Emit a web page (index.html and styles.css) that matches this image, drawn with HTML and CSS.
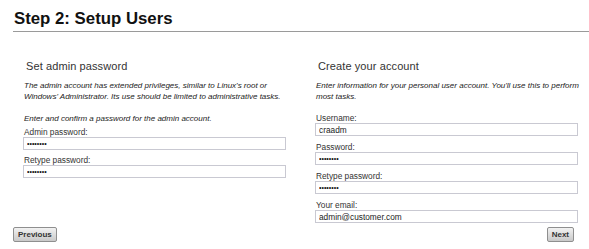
FILE: index.html
```html
<!DOCTYPE html>
<html>
<head>
<meta charset="utf-8">
<link rel="stylesheet" href="styles.css">
</head>
<body>
<div class="page">
  <h1 class="title">Step 2: Setup Users</h1>
  <div class="columns">
    <section class="col col-left">
      <h2 class="col-title">Set admin password</h2>
      <p class="note">The admin account has extended privileges, similar to Linux's root or Windows' Administrator. Its use should be limited to administrative tasks.</p>
      <p class="note note-2">Enter and confirm a password for the admin account.</p>
      <label class="field"><span class="label">Admin password:</span><input class="input pw" type="password" value="xxxxxxxx"></label>
      <label class="field"><span class="label">Retype password:</span><input class="input pw" type="password" value="xxxxxxxx"></label>
    </section>
    <section class="col">
      <h2 class="col-title">Create your account</h2>
      <p class="note">Enter information for your personal user account. You'll use this to perform most tasks.</p>
      <label class="field"><span class="label">Username:</span><input class="input" type="text" value="craadm"></label>
      <label class="field"><span class="label">Password:</span><input class="input pw" type="password" value="xxxxxxxx"></label>
      <label class="field"><span class="label">Retype password:</span><input class="input pw" type="password" value="xxxxxxxx"></label>
      <label class="field"><span class="label">Your email:</span><input class="input" type="text" value="admin@customer.com"></label>
    </section>
  </div>
  <div class="footer">
    <button class="btn" type="button">Previous</button>
    <button class="btn" type="button">Next</button>
  </div>
</div>
</body>
</html>
```
FILE: styles.css
```css
html, body {
  margin: 0;
  padding: 0;
  background: #fff;
}
body {
  font-family: "Liberation Sans", Arial, sans-serif;
  color: #333;
}
.page {
  padding-left: 13px;
  width: 576px;
}
.title {
  margin: 0;
  padding: 9px 0 2px 1px;
  font-size: 16.8px;
  line-height: 20px;
  font-weight: bold;
  color: #111;
  border-bottom: 1px solid #9a9a9a;
}
.columns {
  display: grid;
  grid-template-columns: 263px 263px;
  column-gap: 29px;
  padding-left: 10px;
  margin-top: 28px;
}
.col {
  display: flex;
  flex-direction: column;
}
.col-title {
  margin: 0 0 7px 3px;
  font-size: 11px;
  line-height: 13px;
  font-weight: normal;
  color: #333;
  letter-spacing: 0.1px;
}
.note {
  margin: 0 0 11px 1px;
  font-size: 8px;
  line-height: 11px;
  font-style: italic;
  color: #222;
  width: 270px;
}
.note-2 {
  margin-bottom: 3px;
}
.field {
  display: flex;
  flex-direction: column;
  margin-bottom: 6px;
}
.col-left .field {
  margin-bottom: 5px;
}
.label {
  font-size: 8.3px;
  line-height: 10px;
  color: #333;
  padding-left: 1px;
}
.input {
  box-sizing: border-box;
  width: 263px;
  height: 13px;
  margin: 0;
  padding: 0 3px;
  border: 1px solid #c9c9d2;
  background: #fff;
  font-family: "Liberation Sans", Arial, sans-serif;
  font-size: 8.3px;
  color: #222;
  outline: none;
}
.pw {
  font-size: 7px;
  color: #111;
}
.footer {
  display: flex;
  justify-content: space-between;
  width: 561px;
  margin-top: -2px;
}
.btn {
  box-sizing: border-box;
  height: 15px;
  padding: 0 4px;
  margin: 0;
  border: 1px solid #8f8f8f;
  border-radius: 2px;
  background: linear-gradient(#f2f2f2, #c9c9c9);
  font-family: "Liberation Sans", Arial, sans-serif;
  font-size: 8px;
  font-weight: bold;
  color: #333;
  line-height: 13px;
}
```
